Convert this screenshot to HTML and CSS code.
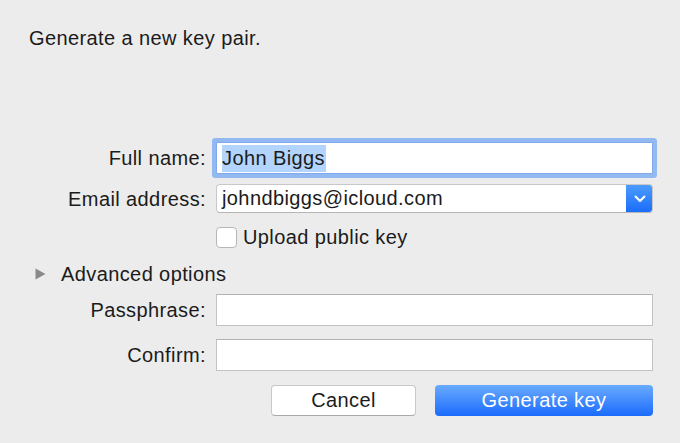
FILE: index.html
```html
<!DOCTYPE html>
<html>
<head>
<meta charset="utf-8">
<link rel="stylesheet" href="styles.css">
</head>
<body>
<div class="dialog">
  <div class="title">Generate a new key pair.</div>

  <div class="row row-name">
    <label class="label">Full name:</label>
    <div class="field focused"><span class="sel">John Biggs</span></div>
  </div>

  <div class="row row-email">
    <label class="label">Email address:</label>
    <div class="popup">
      <span class="popup-text">johndbiggs@icloud.com</span>
      <span class="popup-btn">
        <svg width="12" height="8" viewBox="0 0 12 8"><path d="M1.5 1.5 L6 6 L10.5 1.5" fill="none" stroke="#fff" stroke-width="2" stroke-linecap="round" stroke-linejoin="round"/></svg>
      </span>
    </div>
  </div>

  <div class="row row-check">
    <span class="label"></span>
    <div class="check-wrap"><span class="checkbox"></span><span class="check-text">Upload public key</span></div>
  </div>

  <div class="advanced">
    <svg class="tri" width="11" height="12" viewBox="0 0 11 12"><path d="M0.5 0.5 L10.5 6 L0.5 11.5 Z" fill="#8a8a8a"/></svg>
    <span>Advanced options</span>
  </div>

  <div class="row row-pass">
    <label class="label">Passphrase:</label>
    <div class="field"></div>
  </div>

  <div class="row row-confirm">
    <label class="label">Confirm:</label>
    <div class="field"></div>
  </div>

  <div class="row row-buttons">
    <span class="label"></span>
    <div class="buttons">
      <button class="btn cancel">Cancel</button>
      <button class="btn primary">Generate key</button>
    </div>
  </div>
</div>
</body>
</html>
```

FILE: styles.css
```css
html, body {
  margin: 0;
  padding: 0;
  background: #ececec;
}
body {
  font-family: "Liberation Sans", Arial, sans-serif;
  font-size: 20px;
  letter-spacing: 0.4px;
  color: #1b1b1b;
  width: 680px;
  height: 443px;
  overflow: hidden;
}
.dialog {
  padding: 26px 27px 0 29px;
  display: flex;
  flex-direction: column;
}
.title {
  line-height: 24px;
  height: 24px;
}
.row {
  display: grid;
  grid-template-columns: 176px 437px;
  column-gap: 11px;
  align-items: center;
}
.label {
  text-align: right;
  line-height: 24px;
  margin-right: -1px;
}
.row-name { margin-top: 92px; }
.row-email { margin-top: 10px; }
.row-check { margin-top: 14px; }
.row-pass { margin-top: 10px; }
.row-confirm { margin-top: 13px; }
.row-buttons { margin-top: 14px; }

.field {
  box-sizing: border-box;
  height: 32px;
  background: #fff;
  border: 1px solid #c3c3c3;
  border-top-color: #b3b3b3;
  display: flex;
  align-items: center;
  padding-left: 5px;
}
.field.focused {
  border-color: #7fa9ea;
  box-shadow: 0 0 0 4px #93b9f2;
  border-radius: 1px;
}
.sel {
  background: #b3d4fc;
  line-height: 27px;
  padding-right: 1px;
}
.popup {
  box-sizing: border-box;
  height: 29px;
  background: #fff;
  border: 1px solid #c8c8c8;
  border-bottom-color: #b5b5b5;
  border-radius: 4px;
  display: flex;
  align-items: center;
  justify-content: space-between;
  padding-left: 5px;
  overflow: hidden;
}
.popup-btn {
  width: 27px;
  height: 29px;
  margin: -1px -1px -1px 0;
  background: linear-gradient(#4d9dfd, #1a6cfc);
  border-radius: 0 4px 4px 0;
  display: flex;
  align-items: center;
  justify-content: center;
}
.check-wrap {
  display: flex;
  align-items: center;
  height: 20px;
}
.checkbox {
  box-sizing: border-box;
  width: 21px;
  height: 21px;
  background: #fff;
  border: 1px solid #b6b6b6;
  border-radius: 4px;
  margin-right: 6px;
}
.check-text { line-height: 24px; }

.advanced {
  margin-top: 17px;
  height: 20px;
  display: flex;
  align-items: center;
  padding-left: 6px;
}
.tri { margin-right: 15px; }

.buttons {
  display: flex;
  justify-content: flex-end;
  gap: 19px;
}
.btn {
  font-family: "Liberation Sans", Arial, sans-serif;
  font-size: 20px;
  letter-spacing: 0.4px;
  height: 31px;
  border-radius: 4px;
  padding: 0;
  margin: 0;
}
.cancel {
  width: 145px;
  background: #fff;
  color: #1b1b1b;
  border: 1px solid #c8c8c8;
  border-bottom-color: #aaaaaa;
}
.primary {
  width: 218px;
  color: #fff;
  border: none;
  background: linear-gradient(#69abfe, #1b6bfc);
}
```
